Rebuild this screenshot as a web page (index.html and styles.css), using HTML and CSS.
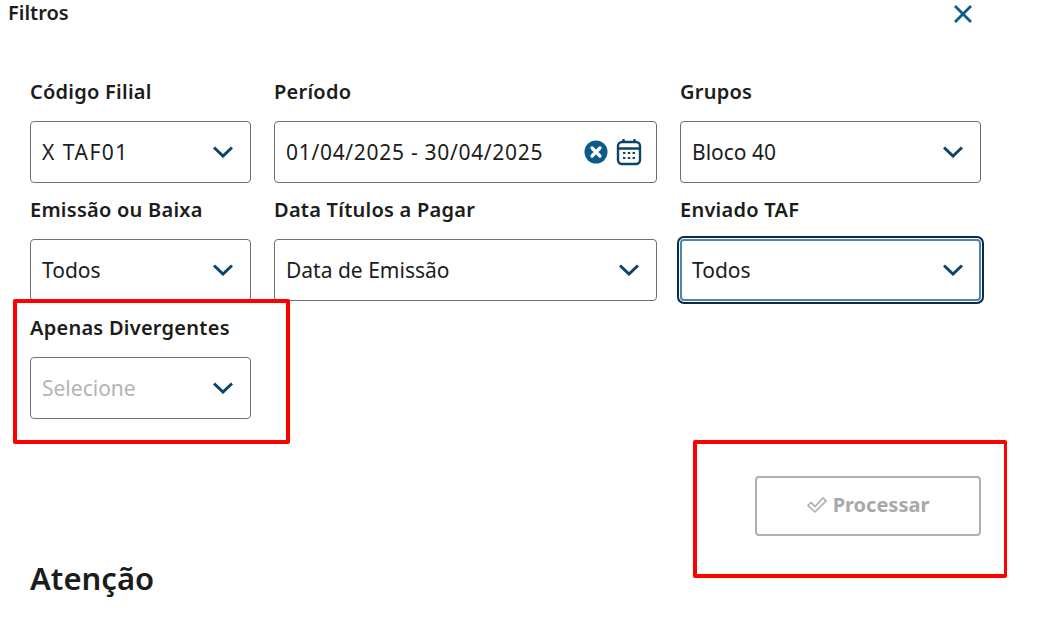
FILE: index.html
```html
<!DOCTYPE html>
<html lang="en">
<head>
    <meta charset="UTF-8">
    <meta name="viewport" content="width=device-width, initial-scale=1.0">
    <title>Filtros</title>
    <link rel="stylesheet" href="styles.css">
</head>
<body>
    <div class="modal-header">
        <h2>Filtros</h2>
        <svg class="close-icon" width="20" height="20" viewBox="0 0 20 20"><path d="M2 2 L18 18 M18 2 L2 18"/></svg>
    </div>

    <div class="filters">
        <div class="field">
            <label>Código Filial</label>
            <div class="select">
                <span class="code">X TAF01</span>
                <svg class="chevron" width="20" height="12" viewBox="0 0 20 12"><path d="M1 1.5 L10 10 L19 1.5"/></svg>
            </div>
        </div>
        <div class="field">
            <label>Período</label>
            <div class="select">
                <span class="date">01/04/2025 - 30/04/2025</span>
                <div class="date-icons">
                    <svg width="24" height="24" viewBox="0 0 24 24"><circle cx="12" cy="12" r="11.5" fill="#0c5b8a"/><path d="M8 8 L16 16 M16 8 L8 16" stroke="#fff" stroke-width="3.2" stroke-linecap="round"/></svg>
                    <svg class="calendar" width="26" height="28" viewBox="0 0 26 28"><rect x="2" y="4" width="22" height="22" rx="4"/><path d="M2 10.5 H24 M7.5 1 V5 M18.5 1 V5"/><path class="dots" d="M7 15 h2.4 M11.8 15 h2.4 M16.6 15 h2.4 M7 20 h2.4 M11.8 20 h2.4 M16.6 20 h2.4"/></svg>
                </div>
            </div>
        </div>
        <div class="field">
            <label>Grupos</label>
            <div class="select">
                <span>Bloco 40</span>
                <svg class="chevron" width="20" height="12" viewBox="0 0 20 12"><path d="M1 1.5 L10 10 L19 1.5"/></svg>
            </div>
        </div>

        <div class="field">
            <label>Emissão ou Baixa</label>
            <div class="select">
                <span>Todos</span>
                <svg class="chevron" width="20" height="12" viewBox="0 0 20 12"><path d="M1 1.5 L10 10 L19 1.5"/></svg>
            </div>
        </div>
        <div class="field">
            <label>Data Títulos a Pagar</label>
            <div class="select">
                <span>Data de Emissão</span>
                <svg class="chevron" width="20" height="12" viewBox="0 0 20 12"><path d="M1 1.5 L10 10 L19 1.5"/></svg>
            </div>
        </div>
        <div class="field">
            <label>Enviado TAF</label>
            <div class="select focused">
                <span>Todos</span>
                <svg class="chevron" width="20" height="12" viewBox="0 0 20 12"><path d="M1 1.5 L10 10 L19 1.5"/></svg>
            </div>
        </div>

        <div class="field">
            <label>Apenas Divergentes</label>
            <div class="select">
                <span class="placeholder">Selecione</span>
                <svg class="chevron" width="20" height="12" viewBox="0 0 20 12"><path d="M1 1.5 L10 10 L19 1.5"/></svg>
            </div>
        </div>
    </div>

    <div class="actions">
        <button class="btn-process" disabled>
            <svg width="20" height="18" viewBox="0 0 20 18"><path d="M1 9.5 L4 6.5 L8 10.5 L16 2 L19 5 L8 16 Z"/></svg>
            Processar
        </button>
    </div>

    <h1 class="notice-title">Atenção</h1>

    <!-- red marks drawn over the screenshot -->
    <div class="mark mark-left"></div>
    <div class="mark mark-right"></div>
</body>
</html>
```

FILE: styles.css
```css
* {
    margin: 0;
    padding: 0;
    box-sizing: border-box;
}

html, body {
    height: 100%;
    overflow: hidden;
}

body {
    position: relative;
    background-color: #fff;
    color: #1c1c1c;
    font-family: 'Noto Sans', 'Open Sans', sans-serif;
}

.modal-header {
    display: flex;
    justify-content: space-between;
    align-items: flex-start;
    height: 80px;
    padding: 1px 75px 0 8px;
}

.modal-header h2 {
    font-size: 20px;
    font-weight: 600;
    line-height: 24px;
}

.close-icon {
    margin-top: 3px;
    fill: none;
    stroke: #0c5b8a;
    stroke-width: 2.8;
}

.filters {
    display: grid;
    grid-template-columns: 221px 383px 301px;
    column-gap: 23px;
    padding-left: 30px;
}

.field {
    display: flex;
    flex-direction: column;
    height: 118px;
}

.field label {
    height: 41px;
    font-size: 20px;
    font-weight: 600;
    line-height: 24px;
    letter-spacing: 0.25px;
}

.select {
    display: flex;
    justify-content: space-between;
    align-items: center;
    height: 62px;
    padding: 0 17px 0 11px;
    border: 1px solid #6f6f6f;
    border-radius: 4px;
    font-size: 21px;
}

.select.focused {
    border: 2px solid #4a87b0;
    padding: 0 16px 0 10px;
    outline: 2px solid #0b2a45;
    outline-offset: 1px;
}

.placeholder {
    color: #b4b4b4;
}

.chevron {
    fill: none;
    stroke: #0b4468;
    stroke-width: 3;
}

.code {
    letter-spacing: 1.5px;
}

.date {
    letter-spacing: 0.7px;
}

.date-icons {
    display: flex;
    align-items: center;
    gap: 8px;
    margin-right: -3px;
}

.calendar {
    fill: none;
    stroke: #0b4468;
    stroke-width: 2.4;
}

.calendar .dots {
    stroke-width: 2.2;
}

.actions {
    display: flex;
    justify-content: flex-end;
    width: 981px;
    margin-top: 42px;
}

.btn-process {
    display: flex;
    justify-content: center;
    align-items: center;
    gap: 6px;
    width: 226px;
    height: 60px;
    padding-bottom: 3px;
    border: 2px solid #b0b0b0;
    border-radius: 4px;
    background-color: #fff;
    color: #a9a9a9;
    font-family: inherit;
    font-size: 20px;
    font-weight: 700;
}

.btn-process svg {
    fill: none;
    stroke: #b0b0b0;
    stroke-width: 1.6;
}

.notice-title {
    margin: 20px 0 0 30px;
    font-size: 31px;
    font-weight: 600;
    line-height: 44px;
}

.mark {
    position: absolute;
    border: 4px solid #ff0000;
    border-radius: 2px;
}

.mark-left {
    left: 13px;
    top: 299px;
    width: 277px;
    height: 145px;
}

.mark-right {
    left: 693px;
    top: 440px;
    width: 314px;
    height: 138px;
    border-right-width: 3px;
}
```
